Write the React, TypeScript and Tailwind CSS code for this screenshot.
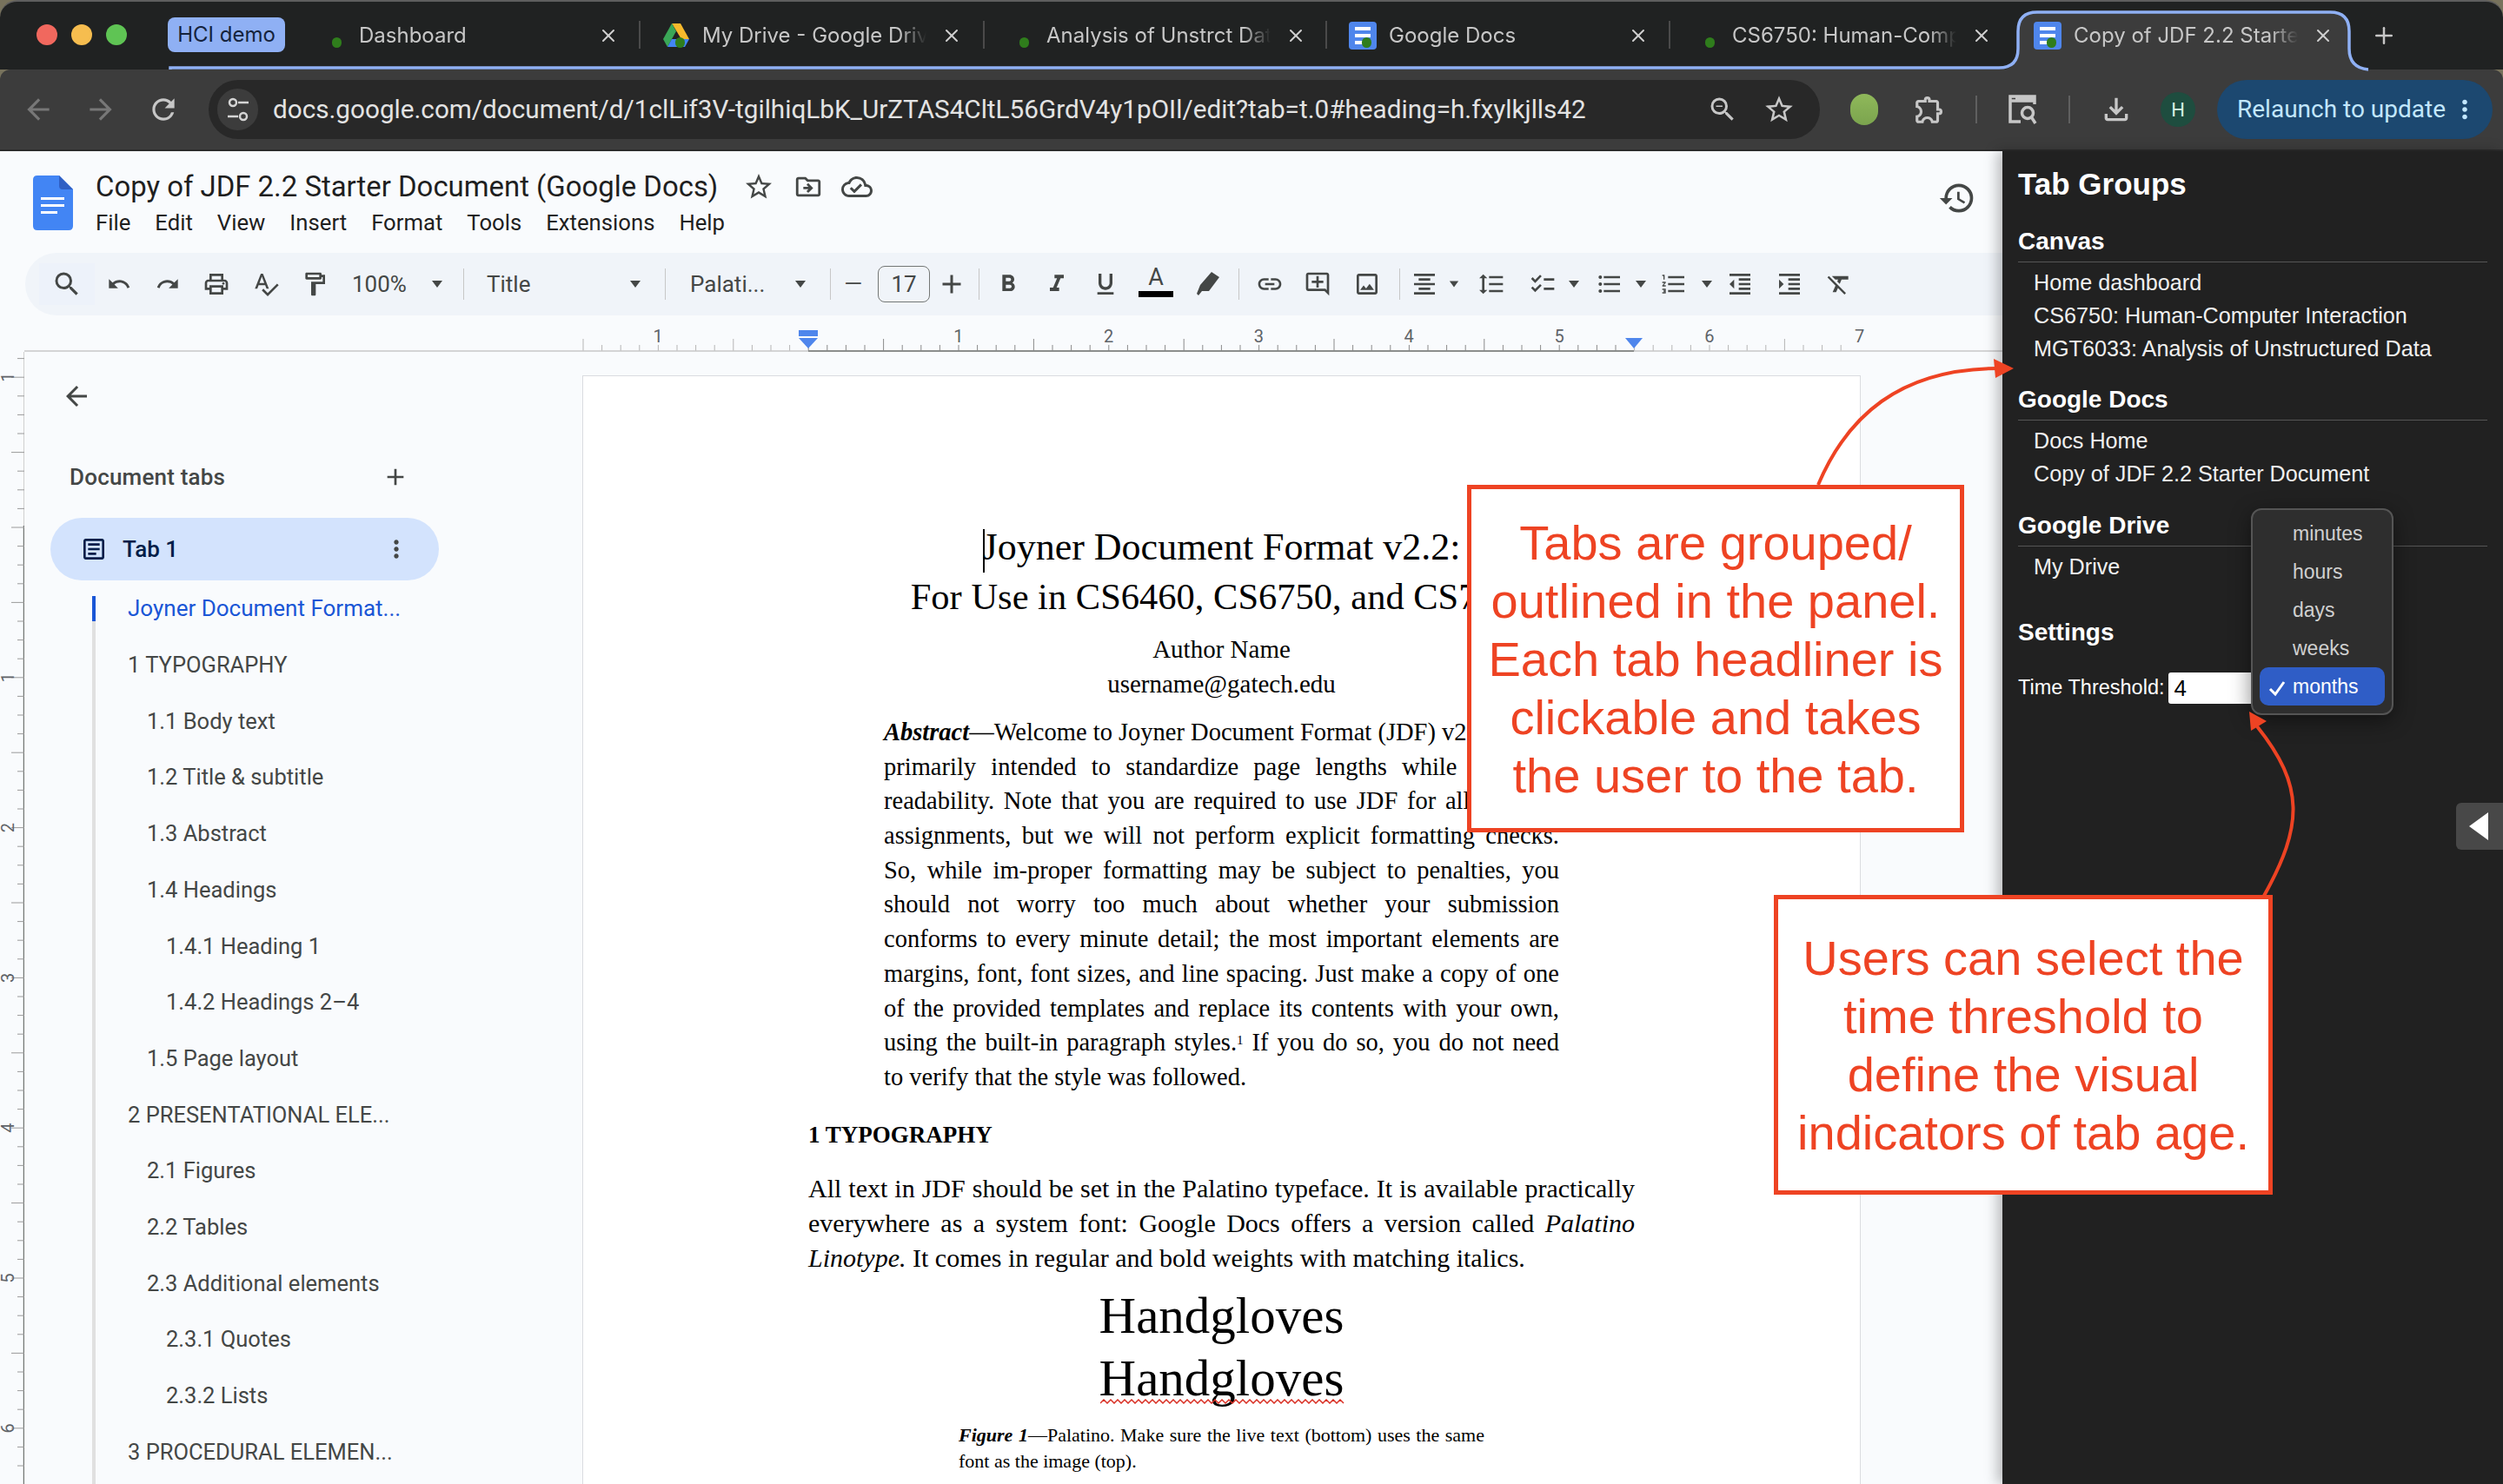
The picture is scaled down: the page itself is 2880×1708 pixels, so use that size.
import type { ReactNode } from 'react'
import { X, Plus } from 'lucide-react'
import {
  MdAdd,
  MdArrowBack,
  MdArrowForward,
  MdFormatAlignCenter,
  MdFormatBold,
  MdFormatClear,
  MdFormatIndentDecrease,
  MdFormatIndentIncrease,
  MdFormatItalic,
  MdFormatLineSpacing,
  MdFormatListBulleted,
  MdFormatListNumbered,
  MdFormatUnderlined,
  MdHistory,
  MdMoreVert,
  MdOutlineAddComment,
  MdOutlineArticle,
  MdOutlineChecklist,
  MdOutlineCloudDone,
  MdOutlineDriveFileMove,
  MdOutlineExtension,
  MdOutlineFileDownload,
  MdOutlineFormatPaint,
  MdOutlineImage,
  MdOutlineInsertLink,
  MdOutlinePrint,
  MdOutlineSpellcheck,
  MdOutlineStarBorder,
  MdOutlineZoomOut,
  MdRedo,
  MdRefresh,
  MdSearch,
  MdUndo
} from 'react-icons/md'

const SERIF = "[font-family:'Liberation_Serif',serif]"

function DocsFavicon() {
  return (
    <svg width="32" height="32" viewBox="0 0 32 32">
      <rect width="32" height="32" rx="4" fill="#4f86ec" />
      <rect x="7" y="6" width="18" height="4" fill="#fff" />
      <rect x="7" y="14" width="18" height="4" fill="#fff" />
      <rect x="7" y="22" width="18" height="4" fill="#fff" />
    </svg>
  )
}

function DriveFavicon() {
  return (
    <svg width="32" height="32" viewBox="0 0 32 32">
      <path d="M11 2 L21 2 L31 20 L22 20 Z" fill="#f6b92c" />
      <path d="M11 2 L1 20 L6 29 L16 11 Z" fill="#3aa757" />
      <path d="M6 29 L26 29 L31 20 L11 20 Z" fill="#4285f4" />
    </svg>
  )
}

function Tab({
  title,
  favicon,
  className,
  divider = true
}: {
  title: string
  favicon?: ReactNode
  className: string
  divider?: boolean
}) {
  return (
    <div className={`relative flex h-[64px] flex-none items-center pl-[25px] ${className}`}>
      <div className="relative h-[32px] w-[32px] flex-none">
        {favicon}
        <span className="absolute left-[15px] top-[18px] h-[12px] w-[11px] rounded-full bg-[#2f7d1c]" />
      </div>
      <div className="ml-[14px] w-[258px] overflow-hidden whitespace-nowrap text-[24px] text-[#c7c7c7] [mask-image:linear-gradient(to_right,black_88%,transparent)]">
        {title}
      </div>
      <X size={24} strokeWidth={2} className="ml-[17px] flex-none text-[#d0d0d0]" />
      {divider && <span className="absolute right-0 top-[15px] h-[32px] w-[2px] bg-[#4a4a4a]" />}
    </div>
  )
}

function TabStrip() {
  return (
    <div className="relative flex h-[80px] flex-none items-start rounded-t-[20px] border-t-2 border-[#5e5e5e] bg-[#202222] [font-family:Inter,sans-serif]">
      {/* group outline and the active tab shape */}
      <svg className="absolute left-0 top-[-2px]" width="2880" height="82">
        <path
          d="M2305 80 Q2322 78 2322 56 V36 Q2322 14 2344 14 H2681 Q2703 14 2703 36 V56 Q2703 78 2725 80 Z"
          fill="#3c3c3c"
        />
        <path
          d="M196 80 V78 H2300 Q2322 78 2322 56 V36 Q2322 14 2344 14 H2681 Q2703 14 2703 36 V56 Q2703 78 2725 80"
          fill="none"
          stroke="#8fb0f4"
          strokeWidth="3.5"
        />
      </svg>
      <div className="relative flex h-full items-start pt-[18px]">
        <div className="ml-[42px] flex gap-[16px] pt-[8px]">
          <span className="h-[24px] w-[24px] rounded-full bg-[#f1685e]" />
          <span className="h-[24px] w-[24px] rounded-full bg-[#f6bd4f]" />
          <span className="h-[24px] w-[24px] rounded-full bg-[#5fc454]" />
        </div>
        <div className="ml-[47px] flex h-[40px] w-[135px] items-center justify-center rounded-[8px] bg-[#8fb0f4] text-[24px] text-[#15233c]">
          HCI demo
        </div>
        <div className="ml-[14px] -mt-[11px] flex">
          <Tab title="Dashboard" className="w-[395px]" />
          <Tab title="My Drive - Google Drive" favicon={<DriveFavicon />} className="w-[396px]" />
          <Tab title="Analysis of Unstrct Data" className="w-[394px]" />
          <Tab title="Google Docs" favicon={<DocsFavicon />} className="w-[395px]" />
          <Tab title="CS6750: Human-Computer" className="w-[401px]" divider={false} />
          <Tab
            title="Copy of JDF 2.2 Starter"
            favicon={<DocsFavicon />}
            className="w-[395px] [&>div:first-child]:-ml-[8px]"
            divider={false}
          />
          <div className="flex h-[64px] w-[50px] items-center justify-center">
            <Plus size={30} strokeWidth={2} className="text-[#c7c7c7]" />
          </div>
        </div>
      </div>
    </div>
  )
}

function TuneIcon() {
  return (
    <svg width="28" height="32" viewBox="0 0 28 32" fill="none" stroke="#d5d5d5" strokeWidth="2.5">
      <circle cx="8" cy="8" r="4" />
      <path d="M14 8 H26 M2 24 H14" />
      <circle cx="20" cy="24" r="4" />
    </svg>
  )
}

function TabSearchIcon() {
  return (
    <svg width="36" height="40" viewBox="0 0 36 40" fill="none" stroke="#c7c7c7" strokeWidth="3.5">
      <path d="M16 34 H4 V5 H32 V14 M4 10 H32" />
      <path d="M10 5 H32 V11 H10 Z" fill="#c7c7c7" stroke="none" />
      <circle cx="24" cy="24" r="6.5" />
      <path d="M28.5 29 L33 36" />
    </svg>
  )
}

function AddressRow() {
  return (
    <div className="flex h-[94px] flex-none items-center rounded-t-[12px] border-b-2 border-[#2b2b2b] bg-[#3c3c3c] pl-[8px]">
      <div className="flex w-[72px] justify-center text-[#777]">
        <MdArrowBack size={38} />
      </div>
      <div className="flex w-[72px] justify-center text-[#777]">
        <MdArrowForward size={38} />
      </div>
      <div className="flex w-[72px] justify-center text-[#c7c7c7]">
        <MdRefresh size={38} />
      </div>
      <div className="ml-[16px] flex h-[68px] w-[1854px] flex-none items-center rounded-full bg-[#282828] pl-[10px] pr-[28px]">
        <div className="flex h-[48px] w-[47px] flex-none items-center justify-center rounded-full bg-[#3c3c3c]">
          <TuneIcon />
        </div>
        <div className="ml-[17px] whitespace-nowrap text-[29.7px] text-[#e3e3e3] [font-family:Roboto,sans-serif]">
          docs.google.com/document/d/1clLif3V-tgilhiqLbK_UrZTAS4CltL56GrdV4y1pOIl/edit?tab=t.0#heading=h.fxylkjlls42
        </div>
        <div className="ml-auto flex items-center gap-[28px] text-[#c7c7c7]">
          <MdOutlineZoomOut size={36} />
          <MdOutlineStarBorder size={38} />
        </div>
      </div>
      <span className="ml-[35px] h-[36px] w-[32px] flex-none rounded-full bg-[linear-gradient(#8fb85a,#7ba44e)]" />
      <MdOutlineExtension size={38} className="ml-[40px] flex-none text-[#c7c7c7]" />
      <span className="ml-[34px] h-[32px] w-[2px] flex-none bg-[#5f5f5f]" />
      <div className="ml-[34px] flex-none">
        <TabSearchIcon />
      </div>
      <span className="ml-[35px] h-[32px] w-[2px] flex-none bg-[#5f5f5f]" />
      <MdOutlineFileDownload size={40} className="ml-[33px] flex-none text-[#c7c7c7]" />
      <div className="ml-[31px] flex h-[40px] w-[40px] flex-none items-center justify-center rounded-full bg-[#1e4d3f] text-[22px] text-[#d7f0e4] [font-family:Roboto,sans-serif]">
        H
      </div>
      <div className="ml-[25px] flex h-[68px] w-[317px] flex-none items-center rounded-full bg-[#1c4870] pl-[23px] text-[28px] text-[#c2e7ff] [font-family:Roboto,sans-serif]">
        <span className="whitespace-nowrap">Relaunch to update</span>
        <MdMoreVert size={34} className="ml-[5px]" />
      </div>
    </div>
  )
}

function DocsLogo() {
  return (
    <svg width="46" height="63" viewBox="0 0 46 63" className="flex-none">
      <path d="M5 0 H30 L46 16 V58 Q46 63 41 63 H5 Q0 63 0 58 V5 Q0 0 5 0 Z" fill="#4285f4" />
      <path d="M30 0 L46 16 H34 Q30 16 30 12 Z" fill="#2f5fc4" />
      <rect x="9" y="25" width="27" height="3" fill="#fff" />
      <rect x="9" y="33" width="27" height="3" fill="#fff" />
      <rect x="9" y="41" width="19" height="3" fill="#fff" />
    </svg>
  )
}

function DocHeader() {
  const menu = ['File', 'Edit', 'View', 'Insert', 'Format', 'Tools', 'Extensions', 'Help']
  return (
    <div className="flex h-[117px] flex-none text-[#444746]">
      <div className="ml-[38px] mt-[28px]">
        <DocsLogo />
      </div>
      <div className="ml-[26px] pt-[20px]">
        <div className="flex h-[42px] items-center">
          <span className="whitespace-nowrap text-[32.9px] text-[#1f1f1f]">
            Copy of JDF 2.2 Starter Document (Google Docs)
          </span>
          <MdOutlineStarBorder size={36} className="ml-[29px]" />
          <MdOutlineDriveFileMove size={34} className="ml-[22px]" />
          <MdOutlineCloudDone size={36} className="ml-[21px]" />
        </div>
        <div className="mt-[2px] flex h-[36px] items-center gap-[28px] text-[25.7px] text-[#1f1f1f]">
          {menu.map((item) => (
            <span key={item}>{item}</span>
          ))}
        </div>
      </div>
      <MdHistory size={44} className="ml-auto mr-[30px] mt-[32px]" />
    </div>
  )
}

function Caret() {
  return (
    <svg width="14" height="10" viewBox="0 0 14 10">
      <path d="M1 1 H13 L7 9 Z" fill="#444746" />
    </svg>
  )
}

function HighlighterIcon() {
  return (
    <svg width="30" height="32" viewBox="0 0 30 32" fill="#444746">
      <path d="M19 2 L28 8 L16 24 L8 24 L4 29 L2 27 L6 17 Z" />
    </svg>
  )
}

function Cell({ className, children }: { className: string; children?: ReactNode }) {
  return <div className={`flex h-[48px] flex-none items-center justify-center ${className}`}>{children}</div>
}

function Sep({ className = '' }: { className?: string }) {
  return <span className={`h-[36px] w-px flex-none bg-[#c7c7c7] ${className}`} />
}

function DocToolbar() {
  const size = 32
  return (
    <div className="ml-[29px] flex h-[72px] flex-none items-center rounded-l-full bg-[#f0f4f9] pl-[16px] text-[#444746]">
      <Cell className="w-[64px] bg-[#edf2fa]">
        <MdSearch size={36} />
      </Cell>
      <Cell className="w-[56px]">
        <MdUndo size={28} />
      </Cell>
      <Cell className="w-[56px]">
        <MdRedo size={28} />
      </Cell>
      <Cell className="w-[56px]">
        <MdOutlinePrint size={size} />
      </Cell>
      <Cell className="w-[58px]">
        <MdOutlineSpellcheck size={size} />
      </Cell>
      <Cell className="w-[54px]">
        <MdOutlineFormatPaint size={size} />
      </Cell>
      <Cell className="ml-[16px] w-[85px] !justify-start text-[26px]">100%</Cell>
      <Cell className="w-[26px]">
        <Caret />
      </Cell>
      <Sep className="ml-[17px]" />
      <Cell className="ml-[26px] w-[158px] !justify-start text-[26px]">Title</Cell>
      <Cell className="w-[26px]">
        <Caret />
      </Cell>
      <Sep className="ml-[21px]" />
      <Cell className="ml-[28px] w-[114px] !justify-start text-[26px]">Palati...</Cell>
      <Cell className="w-[26px]">
        <Caret />
      </Cell>
      <Sep className="ml-[21px]" />
      <Cell className="w-[52px] text-[36px] font-light">–</Cell>
      <div className="ml-[2px] flex h-[42px] w-[60px] flex-none items-center justify-center rounded-[8px] border border-[#747775] text-[26px]">
        17
      </div>
      <Cell className="w-[50px]">
        <MdAdd size={36} />
      </Cell>
      <Sep className="ml-[6px]" />
      <Cell className="w-[66px]">
        <MdFormatBold size={size} />
      </Cell>
      <Cell className="w-[46px]">
        <MdFormatItalic size={size} />
      </Cell>
      <Cell className="w-[66px]">
        <MdFormatUnderlined size={size} />
      </Cell>
      <Cell className="w-[50px] flex-col !justify-start">
        <span className="h-[32px] text-[27px] leading-[32px]">A</span>
        <span className="h-[7px] w-[40px] bg-black" />
      </Cell>
      <Cell className="w-[70px]">
        <HighlighterIcon />
      </Cell>
      <Sep />
      <Cell className="ml-px w-[68px]">
        <MdOutlineInsertLink size={size} />
      </Cell>
      <Cell className="w-[42px]">
        <MdOutlineAddComment size={size} />
      </Cell>
      <Cell className="w-[72px]">
        <MdOutlineImage size={size} />
      </Cell>
      <Sep className="ml-px" />
      <Cell className="w-[56px]">
        <MdFormatAlignCenter size={size} />
      </Cell>
      <Cell className="w-[12px]">
        <Caret />
      </Cell>
      <Cell className="w-[74px]">
        <MdFormatLineSpacing size={size} />
      </Cell>
      <Cell className="w-[44px]">
        <MdOutlineChecklist size={size} />
      </Cell>
      <Cell className="w-[28px]">
        <Caret />
      </Cell>
      <Cell className="w-[54px]">
        <MdFormatListBulleted size={size} />
      </Cell>
      <Cell className="w-[18px]">
        <Caret />
      </Cell>
      <Cell className="w-[58px]">
        <MdFormatListNumbered size={size} />
      </Cell>
      <Cell className="w-[18px]">
        <Caret />
      </Cell>
      <Cell className="w-[58px]">
        <MdFormatIndentDecrease size={size} />
      </Cell>
      <Cell className="w-[56px]">
        <MdFormatIndentIncrease size={size} />
      </Cell>
      <Cell className="w-[58px]">
        <MdFormatClear size={size} />
      </Cell>
    </div>
  )
}

function HorizontalRuler() {
  const ticks = Array.from({ length: 68 }, (_, i) => i)
  return (
    <svg width="2304" height="42" className="flex-none">
      {ticks.map((i) => {
        const x = 671 + i * 21.6
        const isHalf = Math.abs(Math.round((x - 930) / 21.6) % 8) === 4
        return (
          <line
            key={i}
            x1={x}
            x2={x}
            y1={isHalf ? 27 : 34}
            y2={41}
            stroke={x > 930 && x < 1880 ? '#8a8a8a' : '#b5b5b5'}
          />
        )
      })}
      <path d="M28 41 H2304" stroke="#c7c7c7" strokeWidth="1.5" />
      <path d="M930 41 H1880" stroke="#747775" strokeWidth="1.5" />
      {[-1, 1, 2, 3, 4, 5, 6, 7].map((n) => (
        <text key={n} x={930 + n * 172.8} y={31} textAnchor="middle" fontSize="20" fill="#5f6368">
          {Math.abs(n)}
        </text>
      ))}
      <rect x="919" y="17" width="22" height="7" fill="#4f86ec" />
      <path d="M919 26 H941 L930 38 Z" fill="#4f86ec" />
      <path d="M1870 26 H1890 L1880 38 Z" fill="#4f86ec" />
    </svg>
  )
}

function VerticalRuler() {
  const ticks = Array.from({ length: 70 }, (_, i) => i - 9)
  return (
    <svg width="28" height="1303" className="flex-none">
      <path d="M27.5 0 V200" stroke="#d0d0d0" />
      <path d="M27.5 200 V1303" stroke="#747775" strokeWidth="1.5" />
      {ticks.map((k) => {
        const y = 202 + k * 21.6
        const isHalf = Math.abs(k % 8) === 4
        const isWhole = k % 8 === 0
        return <line key={k} x1={isHalf || isWhole ? 13 : 20} x2={28} y1={y} y2={y} stroke="#9a9a9a" />
      })}
      {[-1, 1, 2, 3, 4, 5, 6].map((n) => {
        const y = 202 + n * 172.8
        return (
          <text key={n} x={9} y={y} textAnchor="middle" fontSize="20" fill="#5f6368" transform={`rotate(-90 9 ${y}) translate(0 7)`}>
            {Math.abs(n)}
          </text>
        )
      })}
    </svg>
  )
}

const outline: { label: string; indent: 0 | 1 | 2 }[] = [
  { label: '1 TYPOGRAPHY', indent: 0 },
  { label: '1.1 Body text', indent: 1 },
  { label: '1.2 Title & subtitle', indent: 1 },
  { label: '1.3 Abstract', indent: 1 },
  { label: '1.4 Headings', indent: 1 },
  { label: '1.4.1 Heading 1', indent: 2 },
  { label: '1.4.2 Headings 2–4', indent: 2 },
  { label: '1.5 Page layout', indent: 1 },
  { label: '2 PRESENTATIONAL ELE...', indent: 0 },
  { label: '2.1 Figures', indent: 1 },
  { label: '2.2 Tables', indent: 1 },
  { label: '2.3 Additional elements', indent: 1 },
  { label: '2.3.1 Quotes', indent: 2 },
  { label: '2.3.2 Lists', indent: 2 },
  { label: '3 PROCEDURAL ELEMEN...', indent: 0 }
]

function Sidebar() {
  const indents = ['pl-[37px]', 'pl-[59px]', 'pl-[81px]']
  return (
    <div className="flex w-[642px] flex-none flex-col overflow-hidden text-[26px] text-[#444746]">
      <div className="ml-[42px] mt-[29px] flex h-[44px] items-center">
        <MdArrowBack size={36} />
      </div>
      <div className="ml-[52px] mt-[49px] flex h-[44px] items-center">
        <span className="font-medium tracking-[0.2px]">Document tabs</span>
        <MdAdd size={32} className="ml-[180px]" />
      </div>
      <div className="ml-[30px] mt-[25px] flex h-[72px] w-[447px] flex-none items-center rounded-full bg-[#d3e3fd] pl-[34px] font-medium text-[#041e49]">
        <MdOutlineArticle size={32} />
        <span className="ml-[17px]">Tab 1</span>
        <MdMoreVert size={32} className="ml-[235px] text-[#444746]" />
      </div>
      <div className="ml-[78px] mt-[18px] flex flex-1 flex-col gap-[35.7px] border-l-4 border-[#e0e0e0] text-[25.5px]">
        <div className="-ml-[4px] flex h-[29px] flex-none items-center border-l-4 border-[#1a56d6] pl-[37px] text-[26px] text-[#1a56d6]">
          Joyner Document Format...
        </div>
        {outline.map((row) => (
          <div key={row.label} className={`flex h-[29px] flex-none items-center whitespace-nowrap ${indents[row.indent]}`}>
            {row.label}
          </div>
        ))}
      </div>
    </div>
  )
}

function Line({ children }: { children: ReactNode }) {
  return <div className="whitespace-nowrap text-justify [text-align-last:justify]">{children}</div>
}

function Squiggle() {
  const points = Array.from({ length: 71 }, (_, i) => `${i * 4},${i % 2 === 0 ? 5 : 1}`).join(' ')
  return (
    <svg width="281" height="6" className="absolute left-[1px] top-[60px]">
      <polyline points={points} fill="none" stroke="#d93025" strokeWidth="1.5" />
    </svg>
  )
}

function DocPage() {
  return (
    <div className={`mt-[27px] h-[1400px] w-[1471px] flex-none border border-[#dadce0] bg-white px-[259px] pt-[169px] text-black ${SERIF}`}>
      <div className="relative text-center text-[44px] leading-[56px]">
        <span className="-mr-[2px] inline-block h-[50px] w-[2px] bg-black align-middle" />
        Joyner Document Format v2.2:
      </div>
      <div className="whitespace-nowrap text-center text-[42.5px] leading-[56px]">
        For Use in CS6460, CS6750, and CS7637
      </div>
      <div className="mt-[12px] text-center text-[29px] leading-[40px]">Author Name</div>
      <div className="text-center text-[29px] leading-[41px]">username@gatech.edu</div>

      <div className="mx-[87px] mt-[15px] text-[28.5px] leading-[39.7px]">
        <Line>
          <b className="italic">Abstract</b>—Welcome to Joyner Document Format (JDF) v2.2. JDF is
        </Line>
        <Line>
          primarily intended to standardize page lengths while <span className="tracking-[-2px]">preserving</span>
        </Line>
        <Line>readability. Note that you are required to use JDF for all CS6750</Line>
        <Line>assignments, but we will not perform explicit formatting checks.</Line>
        <Line>So, while im-proper formatting may be subject to penalties, you</Line>
        <Line>should not worry too much about whether your submission</Line>
        <Line>conforms to every minute detail; the most important elements are</Line>
        <Line>margins, font, font sizes, and line spacing. Just make a copy of one</Line>
        <Line>of the provided templates and replace its contents with your own,</Line>
        <Line>
          using the built-in paragraph styles.<sup className="text-[15px] leading-none">1</sup> If you do so, you do not need
        </Line>
        <div>to verify that the style was followed.</div>
      </div>

      <div className="mt-[26px] text-[27px] font-bold leading-[40px]">1 TYPOGRAPHY</div>
      <div className="mt-[22px] text-[30px] leading-[40px]">
        <Line>All text in JDF should be set in the Palatino typeface. It is available practically</Line>
        <Line>
          everywhere as a system font: Google Docs offers a version called <i>Palatino</i>
        </Line>
        <div>
          <i>Linotype.</i> It comes in regular and bold weights with matching italics.
        </div>
      </div>

      <div className="mt-[10px] text-center text-[59px] leading-[72px]">Handgloves</div>
      <div className="text-center text-[59px] leading-[72px]">
        <span className="relative inline-block">
          Handgloves
          <Squiggle />
        </span>
      </div>
      <div className="mx-[173px] mt-[15px] text-[22px] leading-[30px]">
        <Line>
          <b className="italic">Figure 1</b>—Palatino. Make sure the live text (bottom) uses the same
        </Line>
        <div>font as the image (top).</div>
      </div>
    </div>
  )
}

function PanelSection({ title, items, className }: { title: string; items: string[]; className: string }) {
  return (
    <div className={className}>
      <div className="flex h-[42px] items-start border-b border-[#555] text-[28px] font-bold leading-[36px]">{title}</div>
      <div className="pt-[4px]">
        {items.map((item) => (
          <div key={item} className="pl-[18px] text-[25.2px] leading-[38px] text-[#f0f0f0]">
            {item}
          </div>
        ))}
      </div>
    </div>
  )
}

function TimeMenu() {
  const units = ['minutes', 'hours', 'days', 'weeks']
  return (
    <div className="absolute left-[286px] top-[411px] flex h-[238px] w-[164px] flex-col rounded-[12px] border-2 border-[#555] bg-[#2e2e2e] px-[8px] pt-[5px] text-[23px] text-[#d0d0d0] shadow-[0_6px_24px_rgba(0,0,0,0.45)]">
      {units.map((unit) => (
        <div key={unit} className="flex h-[44px] flex-none items-center pl-[38px]">
          {unit}
        </div>
      ))}
      <div className="flex h-[44px] w-[144px] flex-none items-center rounded-[10px] bg-[#2f5dc6] pl-[10px] text-white">
        <svg width="20" height="20" viewBox="0 0 20 20" fill="none" stroke="#fff" strokeWidth="3" className="mt-[4px]">
          <path d="M2 11 L8 17 L18 3" />
        </svg>
        <span className="ml-[8px]">months</span>
      </div>
    </div>
  )
}

function TabGroupsPanel() {
  return (
    <div className="relative z-10 w-[576px] flex-none bg-[#212121] pl-[18px] pr-[18px] pt-[16px] text-white shadow-[-6px_0_14px_rgba(0,0,0,0.25)] [font-family:'Liberation_Sans',sans-serif]">
      <div className="text-[35px] font-bold leading-[44px]">Tab Groups</div>
      <PanelSection
        title="Canvas"
        className="mt-[26px]"
        items={['Home dashboard', 'CS6750: Human-Computer Interaction', 'MGT6033: Analysis of Unstructured Data']}
      />
      <PanelSection title="Google Docs" className="mt-[22px]" items={['Docs Home', 'Copy of JDF 2.2 Starter Document']} />
      <PanelSection title="Google Drive" className="mt-[23px]" items={['My Drive']} />
      <div className="mt-[39px] text-[28px] font-bold leading-[36px]">Settings</div>
      <div className="mt-[28px] flex h-[36px] items-center text-[23.5px]">
        <span className="whitespace-nowrap">Time Threshold:</span>
        <input
          readOnly
          value="4"
          className="ml-[5px] h-[36px] w-[104px] rounded-l-[3px] bg-white pl-[6px] text-[26px] text-black outline-none"
        />
      </div>
      <TimeMenu />
      {/* collapse handle */}
      <div className="absolute right-0 top-[750px] flex h-[54px] w-[54px] items-center rounded-l-[6px] bg-[#484848] pl-[15px]">
        <svg width="22" height="32" viewBox="0 0 22 32">
          <path d="M22 0 V32 L0 16 Z" fill="#fff" />
        </svg>
      </div>
    </div>
  )
}

function Callout({ className, lines }: { className: string; lines: string[] }) {
  return (
    <div
      className={`absolute z-20 flex flex-col items-center justify-center border-[5px] border-[#ee4323] bg-white text-[56px] leading-[67px] text-[#ee4323] [font-family:'Liberation_Sans',sans-serif] ${className}`}
    >
      {lines.map((line) => (
        <div key={line} className="whitespace-nowrap">
          {line}
        </div>
      ))}
    </div>
  )
}

function CalloutArrows() {
  return (
    <svg className="pointer-events-none absolute left-0 top-0 z-20" width="2880" height="1708">
      <path d="M2092 558 C2125 480 2185 424 2300 424" fill="none" stroke="#ee4323" strokeWidth="4" />
      <path d="M2317 424 L2294 413 L2296 435 Z" fill="#ee4323" />
      <path d="M2605 1031 C2650 950 2652 905 2597 836" fill="none" stroke="#ee4323" strokeWidth="4" />
      <path d="M2588 819 L2590 841 L2608 830 Z" fill="#ee4323" />
    </svg>
  )
}

export default function App() {
  return (
    <div className="relative flex h-[1708px] w-[2880px] flex-col overflow-hidden bg-[#77725c] [font-family:Roboto,sans-serif]">
      <TabStrip />
      <AddressRow />
      <div className="flex min-h-0 flex-1">
        <div className="flex w-[2304px] flex-none flex-col overflow-hidden bg-[#f9fbfd]">
          <DocHeader />
          <DocToolbar />
          <HorizontalRuler />
          <div className="flex min-h-0 flex-1">
            <VerticalRuler />
            <Sidebar />
            <DocPage />
          </div>
        </div>
        <TabGroupsPanel />
      </div>
      <Callout
        className="left-[1688px] top-[558px] h-[400px] w-[572px]"
        lines={['Tabs are grouped/', 'outlined in the panel.', 'Each tab headliner is', 'clickable and takes', 'the user to the tab.']}
      />
      <Callout
        className="left-[2041px] top-[1030px] h-[345px] w-[574px]"
        lines={['Users can select the', 'time threshold to', 'define the visual', 'indicators of tab age.']}
      />
      <CalloutArrows />
    </div>
  )
}
